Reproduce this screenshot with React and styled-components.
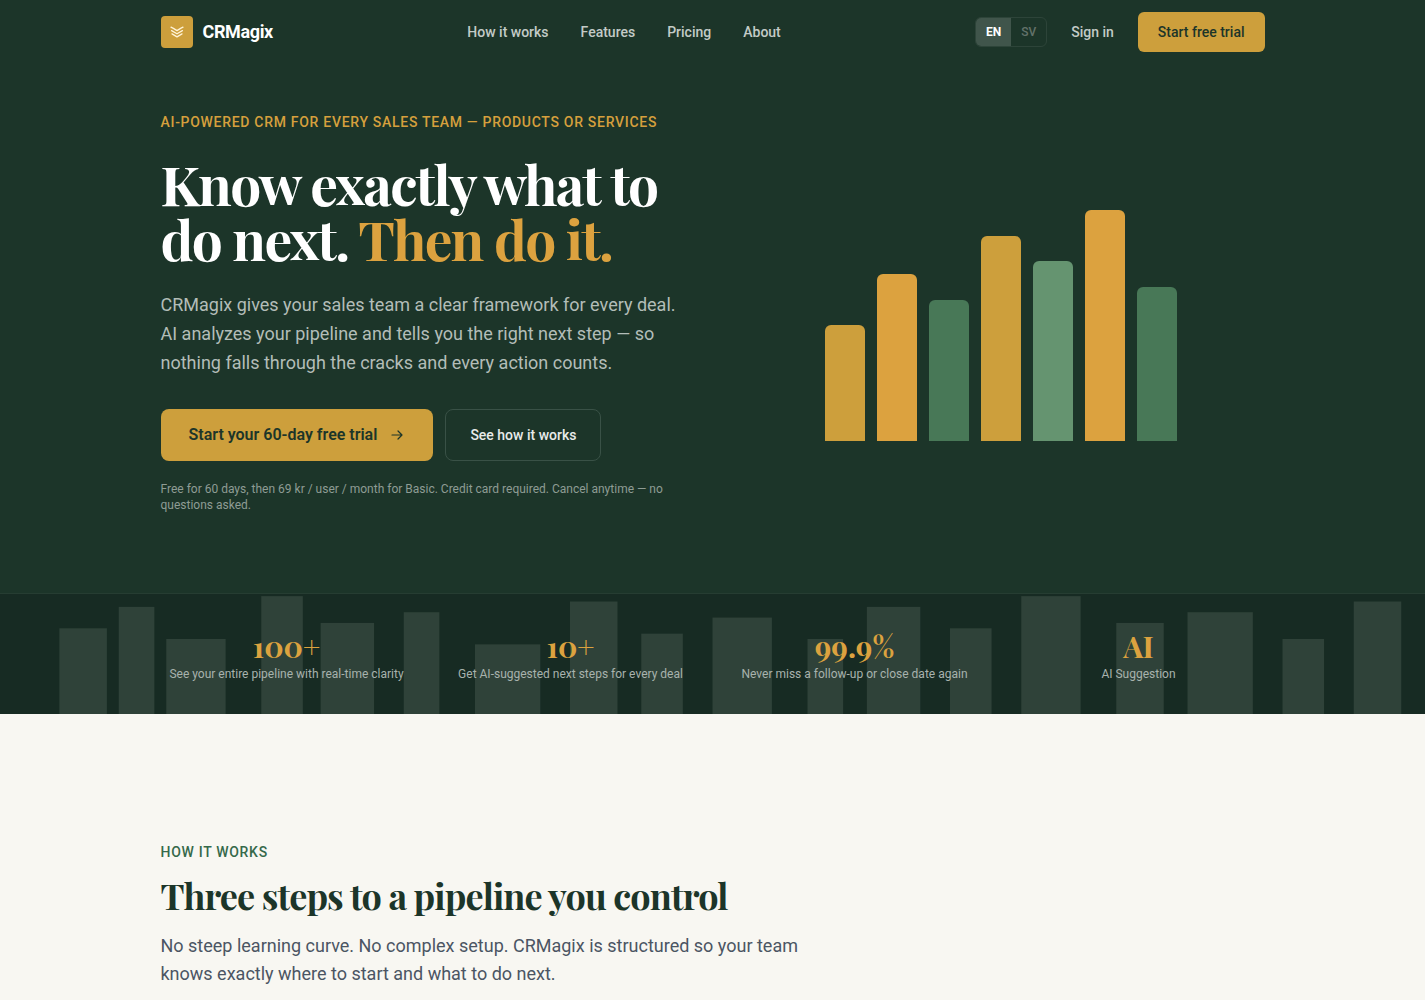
import React from 'react';
import styled, { createGlobalStyle } from 'styled-components';

const GlobalStyle = createGlobalStyle`
  * {
    box-sizing: border-box;
  }
  body {
    margin: 0;
    background: #f8f7f2;
    color: #1c3529;
    font-family: Roboto, 'Liberation Sans', sans-serif;
    font-size: 14px;
    line-height: 20px;
  }
  h1, h2, p, dl, dd {
    margin: 0;
  }
  a {
    color: inherit;
    text-decoration: none;
  }
`;

const serif = `'Playfair Display', 'Liberation Serif', serif`;

const Container = styled.div`
  max-width: 1152px;
  margin: 0 auto;
  padding: 0 24px;
`;

const Dark = styled.div`
  background: #1c3529;
`;

const Bar = styled(Container)`
  display: flex;
  align-items: center;
  justify-content: space-between;
  height: 64px;
`;

const Brand = styled.a`
  display: flex;
  align-items: center;
  gap: 10px;
  color: #fff;
  font-size: 18px;
  font-weight: 700;
  letter-spacing: -0.02em;
`;

const BrandMark = styled.span`
  display: flex;
  align-items: center;
  justify-content: center;
  width: 32px;
  height: 32px;
  border-radius: 4px;
  background: #cd9f3c;
`;

const Links = styled.nav`
  display: flex;
  gap: 32px;
`;

const NavLink = styled.a`
  color: #c3cbc7;
  font-weight: 500;
`;

const Actions = styled.div`
  display: flex;
  align-items: center;
  gap: 24px;
`;

const LangSwitch = styled.div`
  display: flex;
  overflow: hidden;
  border: 1px solid #2d4439;
  border-radius: 6px;
`;

const LangButton = styled.button`
  width: 35px;
  height: 28px;
  padding: 0;
  border: 0;
  background: ${({ $active }) => ($active ? '#40554b' : 'transparent')};
  color: ${({ $active }) => ($active ? '#fff' : '#637269')};
  font: ${({ $active }) => ($active ? 700 : 500)} 12px Roboto, sans-serif;
`;

const Button = styled.a`
  display: inline-flex;
  align-items: center;
  justify-content: center;
  gap: 12px;
  height: ${({ $large }) => ($large ? 52 : 40)}px;
  padding: 0 ${({ $large }) => ($large ? 28 : 20)}px;
  border-radius: ${({ $large }) => ($large ? 8 : 6)}px;
  background: #cd9f3c;
  color: #1c3529;
  font-size: ${({ $large }) => ($large ? 16 : 14)}px;
  font-weight: ${({ $large }) => ($large ? 600 : 500)};
`;

const GhostButton = styled(Button)`
  padding: 0 24px;
  border: 1px solid #395146;
  background: transparent;
  color: #e8ebe9;
  font-size: 14px;
  font-weight: 500;
`;

const Hero = styled(Container)`
  display: grid;
  grid-template-columns: 1fr 1fr;
  align-items: center;
  gap: 48px;
  padding-top: 48px;
  padding-bottom: 80px;

  @media (max-width: 900px) {
    grid-template-columns: 1fr;
  }
`;

const Eyebrow = styled.p`
  color: ${({ $green }) => ($green ? '#35694a' : '#d6a03d')};
  font-weight: 500;
  letter-spacing: 0.05em;
  text-transform: uppercase;
`;

const Title = styled.h1`
  margin-top: 24px;
  color: #fff;
  font-family: ${serif};
  font-size: 55px;
  font-weight: 700;
  line-height: 55px;
  letter-spacing: -0.03em;

  em {
    color: #dca23f;
    font-style: normal;
  }
`;

const Lead = styled.p`
  max-width: 520px;
  margin-top: 24px;
  color: #b3bdb8;
  font-size: 18px;
  line-height: 29px;
`;

const ButtonRow = styled.div`
  display: flex;
  flex-wrap: wrap;
  gap: 12px;
  margin-top: 32px;
`;

const Fine = styled.p`
  margin-top: 20px;
  color: #8e9c94;
  font-size: 12px;
  line-height: 16px;
`;

const Chart = styled.div`
  display: flex;
  align-items: flex-end;
  justify-content: center;
  gap: 12px;
  height: 256px;
`;

const ChartBar = styled.div`
  width: 40px;
  border-radius: 6px 6px 0 0;
  background: ${({ $color }) => $color};
`;

const Stats = styled.section`
  position: relative;
  border-top: 1px solid #263d32;
  background: #172b23;
`;

const Skyline = styled.svg`
  position: absolute;
  inset: 0;
  width: 100%;
  height: 100%;
  fill: #2f4239;
`;

const StatGrid = styled.dl`
  position: relative;
  display: grid;
  grid-template-columns: repeat(4, 1fr);
  gap: 32px;
  max-width: 1152px;
  margin: 0 auto;
  padding: 32px 24px;
  text-align: center;
`;

const Stat = styled.div`
  display: flex;
  flex-direction: column-reverse;

  dt {
    color: #a8b2ad;
    font-size: 12px;
    line-height: 16px;
    white-space: nowrap;
  }
  dd {
    color: #dca23f;
    font-family: ${serif};
    font-size: 30px;
    font-weight: 700;
    line-height: 40px;
  }
`;

const Steps = styled.section`
  padding: 128px 0;
`;

const StepsTitle = styled.h2`
  margin-top: 8px;
  font-family: ${serif};
  font-size: 36px;
  font-weight: 700;
  line-height: 50px;
  letter-spacing: -0.025em;
`;

const StepsText = styled.p`
  max-width: 672px;
  margin-top: 12px;
  color: #4b5563;
  font-size: 18px;
  line-height: 28px;
`;

const bars = [
  [45, '#cd9f3c'],
  [65, '#dca23f'],
  [55, '#487857'],
  [80, '#cd9f3c'],
  [70, '#659470'],
  [90, '#dca23f'],
  [60, '#487857'],
];

// x, width, height
const towers = [
  [50, 40, 80], [100, 30, 100], [140, 50, 70], [220, 35, 110], [270, 45, 85], [340, 30, 95],
  [400, 55, 65], [480, 40, 105], [540, 35, 75], [600, 50, 90], [680, 30, 70], [730, 45, 100],
  [800, 35, 80], [860, 50, 110], [940, 40, 85], [1000, 55, 95], [1080, 35, 70], [1140, 40, 105],
];

const stats = [
  ['100+', 'See your entire pipeline with real-time clarity'],
  ['10+', 'Get AI-suggested next steps for every deal'],
  ['99.9%', 'Never miss a follow-up or close date again'],
  ['AI', 'AI Suggestion'],
];

const LogoIcon = () => (
  <svg width="14" height="12" viewBox="0 0 14 12" fill="none" stroke="#fff3d6" strokeWidth="1.3" strokeLinecap="round" strokeLinejoin="round" aria-hidden="true">
    <path d="M1 1.2l2.4 1.2L7 4.6l3.6-2.2L13 1.2" />
    <path d="M1.6 4.6L7 7.8l5.4-3.2" />
    <path d="M2 7.9l5 3 5-3" />
  </svg>
);

const ArrowIcon = () => (
  <svg width="16" height="16" viewBox="0 0 16 16" fill="none" stroke="currentColor" strokeWidth="1.2" strokeLinecap="round" strokeLinejoin="round" aria-hidden="true">
    <path d="M3 8h10M9 4l4 4-4 4" />
  </svg>
);

const App = () => {
  return (
    <>
      <GlobalStyle />
      <Dark>
        <Bar as="header">
          <Brand href="#">
            <BrandMark><LogoIcon /></BrandMark>
            CRMagix
          </Brand>
          <Links>
            <NavLink href="#how">How it works</NavLink>
            <NavLink href="#features">Features</NavLink>
            <NavLink href="#pricing">Pricing</NavLink>
            <NavLink href="#about">About</NavLink>
          </Links>
          <Actions>
            <LangSwitch>
              <LangButton type="button" $active>EN</LangButton>
              <LangButton type="button">SV</LangButton>
            </LangSwitch>
            <NavLink href="#signin">Sign in</NavLink>
            <Button href="#trial">Start free trial</Button>
          </Actions>
        </Bar>
        <Hero as="section">
          <div>
            <Eyebrow>AI-powered CRM for every sales team — products or services</Eyebrow>
            <Title>
              Know exactly what to do next. <em>Then do it.</em>
            </Title>
            <Lead>
              CRMagix gives your sales team a clear framework for every deal. AI analyzes your
              pipeline and tells you the right next step — so nothing falls through the cracks and
              every action counts.
            </Lead>
            <ButtonRow>
              <Button href="#trial" $large>
                Start your 60-day free trial <ArrowIcon />
              </Button>
              <GhostButton href="#how" $large>See how it works</GhostButton>
            </ButtonRow>
            <Fine>
              Free for 60 days, then 69 kr / user / month for Basic. Credit card required. Cancel
              anytime — no questions asked.
            </Fine>
          </div>
          <Chart>
            {bars.map(([value, color], index) => (
              <ChartBar key={index} $color={color} style={{ height: `${value}%` }} />
            ))}
          </Chart>
        </Hero>
      </Dark>
      <Stats>
        <Skyline viewBox="0 0 1200 112" preserveAspectRatio="none" aria-hidden="true">
          {towers.map(([x, width, height]) => (
            <rect key={x} x={x} y={112 - height} width={width} height={height} />
          ))}
        </Skyline>
        <StatGrid>
          {stats.map(([value, label]) => (
            <Stat key={value}>
              <dt>{label}</dt>
              <dd>{value}</dd>
            </Stat>
          ))}
        </StatGrid>
      </Stats>
      <Steps id="how">
        <Container>
          <Eyebrow $green>How it works</Eyebrow>
          <StepsTitle>Three steps to a pipeline you control</StepsTitle>
          <StepsText>
            No steep learning curve. No complex setup. CRMagix is structured so your team knows
            exactly where to start and what to do next.
          </StepsText>
        </Container>
      </Steps>
    </>
  );
};

export default App;
